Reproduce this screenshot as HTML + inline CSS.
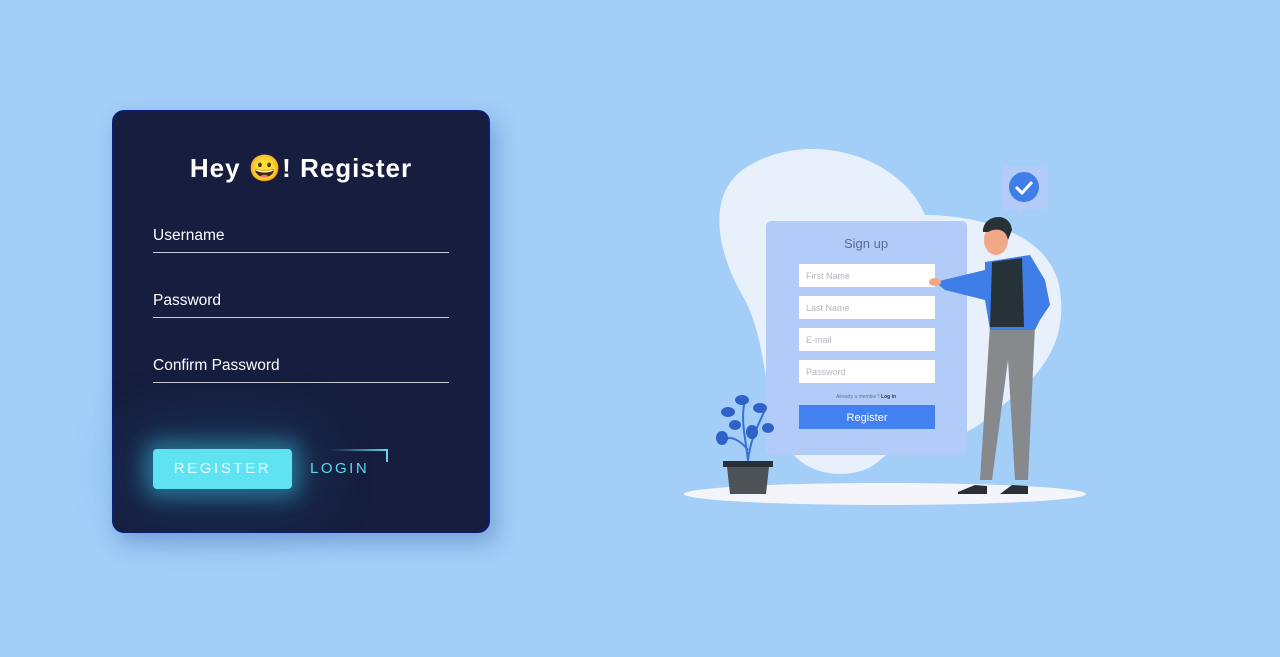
<!DOCTYPE html>
<html><head><meta charset="utf-8"><style>
body{margin:0;width:1280px;height:657px;background:#a2cef8;overflow:hidden;position:relative;font-family:"Liberation Sans",sans-serif}
.card{position:absolute;left:112px;top:110px;width:374px;height:419px;background:#161d3e;border:2px solid #0b1c72;border-radius:12px;box-shadow:6px 10px 22px rgba(40,80,160,.35)}
h1{position:absolute;top:153px;margin:0;text-align:center;color:#fff;font-size:26px;font-weight:bold;letter-spacing:1px}
.lab{position:absolute;left:153px;color:#fff;font-size:15.5px}
.ln{position:absolute;left:153px;width:296px;height:1px;background:#c8ccd8}
.btn{position:absolute;left:153px;top:449px;width:139px;height:40px;background:#5fe3f2;border-radius:4px;box-shadow:0 0 20px 8px rgba(60,200,230,.45),0 0 60px 25px rgba(40,140,180,.2);color:#e9fbff;font-size:15px;letter-spacing:2.6px;text-align:center;line-height:40px}
.login{position:absolute;left:310px;top:460px;color:#5fd8e8;font-size:15px;letter-spacing:2.5px}
</style></head><body>
<div class="card"></div>
<h1 style="left:112px;width:378px">Hey 😀! Register</h1>
<div class="lab" style="top:227px">Username</div><div class="ln" style="top:252px"></div>
<div class="lab" style="top:292px">Password</div><div class="ln" style="top:317px"></div>
<div class="lab" style="top:357px">Confirm Password</div><div class="ln" style="top:382px"></div>
<div class="btn">REGISTER</div>
<div class="login">LOGIN</div>
<div style="position:absolute;left:330px;top:449px;width:57px;height:2px;background:linear-gradient(90deg,transparent,#5fd8e8)"></div>
<div style="position:absolute;left:386px;top:449px;width:2px;height:13px;background:#5fd8e8"></div>

<svg style="position:absolute;left:0;top:0" width="1280" height="657">
<path d="M750 165 C810 130 900 155 925 215 C960 215 1050 225 1060 290 C1070 360 1020 390 985 420 C950 450 900 440 880 460 C860 480 810 480 790 450 C760 400 770 350 745 300 C715 250 705 190 750 165Z" fill="#e8f0fc"/>
<ellipse cx="885" cy="494" rx="201" ry="11" fill="#f3f5fa"/>
<rect x="766" y="221" width="201" height="234" rx="5" fill="#b3cbf8"/>
<text x="866" y="248" text-anchor="middle" font-size="13" fill="#5d6b90" font-family="Liberation Sans">Sign up</text>
<g font-size="9" fill="#b5b8c0" font-family="Liberation Sans">
<rect x="799" y="264" width="136" height="23" fill="#fff"/><text x="806" y="279">First Name</text>
<rect x="799" y="296" width="136" height="23" fill="#fff"/><text x="806" y="311">Last Name</text>
<rect x="799" y="328" width="136" height="23" fill="#fff"/><text x="806" y="343">E-mail</text>
<rect x="799" y="360" width="136" height="23" fill="#fff"/><text x="806" y="375">Password</text>
</g>
<text x="866" y="398" text-anchor="middle" font-size="5" fill="#6a7390">Already a member? <tspan font-weight="bold" fill="#333">Log in</tspan></text>
<rect x="799" y="405" width="136" height="24" fill="#4380f0"/>
<text x="867" y="421" text-anchor="middle" font-size="11" fill="#fff">Register</text>
<rect x="1001" y="166" width="47" height="44" rx="6" fill="#b3cbf8"/>
<path d="M1015 210 L1020 217 L1024 210Z" fill="#b3cbf8"/>
<circle cx="1024" cy="187" r="15" fill="#3f7de8"/>
<path d="M1016 187 L1022 193 L1032 182" stroke="#fff" stroke-width="3" fill="none"/>
<rect x="723" y="461" width="50" height="6" fill="#2a2f35"/>
<path d="M727 467 H769 L766 494 H730Z" fill="#4d5257"/>
<path d="M748 461 C746 440 740 420 745 400 M748 461 C750 440 758 425 765 410 M748 450 C740 440 730 435 725 440" stroke="#3a6fd8" stroke-width="2" fill="none"/>
<g fill="#2f62c8"><ellipse cx="742" cy="400" rx="7" ry="5"/><ellipse cx="760" cy="408" rx="7" ry="5"/><ellipse cx="728" cy="412" rx="7" ry="5"/><ellipse cx="768" cy="428" rx="6" ry="5"/><ellipse cx="722" cy="438" rx="6" ry="7"/><ellipse cx="752" cy="432" rx="6" ry="7"/><ellipse cx="735" cy="425" rx="6" ry="5"/></g>
<path d="M990 325 L980 480 L992 480 L1008 360 L1015 480 L1028 480 L1035 325Z" fill="#878a8c"/>
<path d="M958 492 L975 485 L987 486 L987 494 L958 494Z M1000 494 L1012 485 L1028 486 L1028 494Z" fill="#2a2f35"/>
<path d="M985 262 L1030 255 L1045 280 L1050 305 L1040 320 L1035 330 L990 330 L985 300 L945 290 L935 282 L985 270Z" fill="#3f7de8"/>
<path d="M992 262 L1022 258 L1024 327 L990 327Z" fill="#263238"/>
<ellipse cx="996" cy="240" rx="12" ry="15" fill="#f0a888"/>
<path d="M983 232 C982 215 1010 210 1012 230 L1008 240 C1006 228 995 228 988 232Z" fill="#263238"/>
<ellipse cx="935" cy="282" rx="6" ry="4" fill="#f0a888"/>
</svg>
</body></html>
